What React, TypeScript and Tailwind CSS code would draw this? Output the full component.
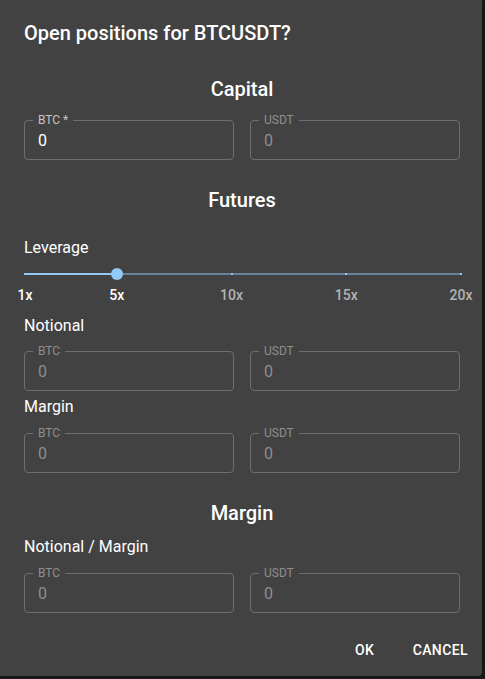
import React from 'react';

const marks = [1, 5, 10, 15, 20];

function Field({ label, value, active }: { label: string; value: string; active?: boolean }) {
  return (
    <div className="relative h-[40px] rounded-[4px] border border-[#6e6e6e]">
      <span
        className={`absolute left-[8px] top-[-9px] bg-[#424242] px-[5px] text-[12px] leading-[16px] ${
          active ? 'text-[#c6c6c6]' : 'text-[#8e8e8e]'
        }`}
      >
        {label}
      </span>
      <div
        className={`flex h-full items-center pl-[13px] pt-[2px] text-[16px] ${
          active ? 'text-white' : 'text-[#8e8e8e]'
        }`}
      >
        {value}
      </div>
    </div>
  );
}

function Pair({ active }: { active?: boolean }) {
  return (
    <div className="grid grid-cols-2 gap-4">
      <Field label={active ? 'BTC *' : 'BTC'} value="0" active={active} />
      <Field label="USDT" value="0" />
    </div>
  );
}

function Heading({ children }: { children: React.ReactNode }) {
  return <h2 className="text-center text-[20px] font-medium leading-[32px] text-white">{children}</h2>;
}

function Label({ children }: { children: React.ReactNode }) {
  return <div className="text-[16px] leading-[24px] text-white">{children}</div>;
}

function LeverageSlider({ value }: { value: number }) {
  const pct = (v: number) => ((v - 1) / 19) * 100;
  return (
    <div className="relative ml-[1px] mr-[-1px] h-[46px]">
      <div className="absolute left-0 right-0 top-[14px] h-[2px] bg-[#68849c]" />
      <div className="absolute left-0 top-[14px] h-[2px] bg-[#90caf9]" style={{ width: `${pct(value)}%` }} />
      {marks.map((m) => (
        <div
          key={m}
          className="absolute top-[14px] h-[2px] w-[2px] -translate-x-1/2 bg-[#90caf9]"
          style={{ left: `${pct(m)}%` }}
        />
      ))}
      <div
        className="absolute top-[9px] h-[12px] w-[12px] -translate-x-1/2 rounded-full bg-[#90caf9]"
        style={{ left: `${pct(value)}%` }}
      />
      {marks.map((m) => (
        <span
          key={`l${m}`}
          className={`absolute top-[26px] -translate-x-1/2 text-[14px] font-medium leading-[20px] ${
            m <= value ? 'text-white' : 'text-[#b3b3b3]'
          }`}
          style={{ left: `${pct(m)}%` }}
        >
          {m}x
        </span>
      ))}
    </div>
  );
}

export default function App() {
  return (
    <div className="h-[679px] w-[485px] overflow-hidden bg-[#1c1c1c] font-['Roboto',sans-serif]">
      <div className="flex h-[676px] w-[482px] flex-col rounded-br-[4px] bg-[#424242] shadow-[0_0_8px_rgba(0,0,0,0.5)]">
        <h1 className="px-6 pt-[17px] text-[20px] font-medium leading-[32px] text-white">
          Open positions for BTCUSDT?
        </h1>

        <div className="flex flex-col pl-6 pr-[22px]">
          <div className="mt-[24px]">
            <Heading>Capital</Heading>
          </div>
          <div className="mt-[15px]">
            <Pair active />
          </div>

          <div className="mt-[24px]">
            <Heading>Futures</Heading>
          </div>
          <div className="mt-[20px]">
            <Label>Leverage</Label>
          </div>
          <div className="mt-[-1px]">
            <LeverageSlider value={5} />
          </div>

          <div className="mt-[9px]">
            <Label>Notional</Label>
          </div>
          <div className="mt-[13px]">
            <Pair />
          </div>
          <div className="mt-[4px]">
            <Label>Margin</Label>
          </div>
          <div className="mt-[14px]">
            <Pair />
          </div>

          <div className="mt-[24px]">
            <Heading>Margin</Heading>
          </div>
          <div className="mt-[6px]">
            <Label>Notional / Margin</Label>
          </div>
          <div className="mt-[14px]">
            <Pair />
          </div>
        </div>

        <div className="mt-[11px] flex justify-end gap-2 py-2 pl-2 pr-[6px]">
          <button className="h-[36px] min-w-[64px] rounded px-2 text-[14px] font-medium uppercase tracking-[0.4px] text-white">
            OK
          </button>
          <button className="h-[36px] min-w-[64px] rounded px-2 text-[14px] font-medium uppercase tracking-[0.4px] text-white">
            Cancel
          </button>
        </div>
      </div>
    </div>
  );
}
